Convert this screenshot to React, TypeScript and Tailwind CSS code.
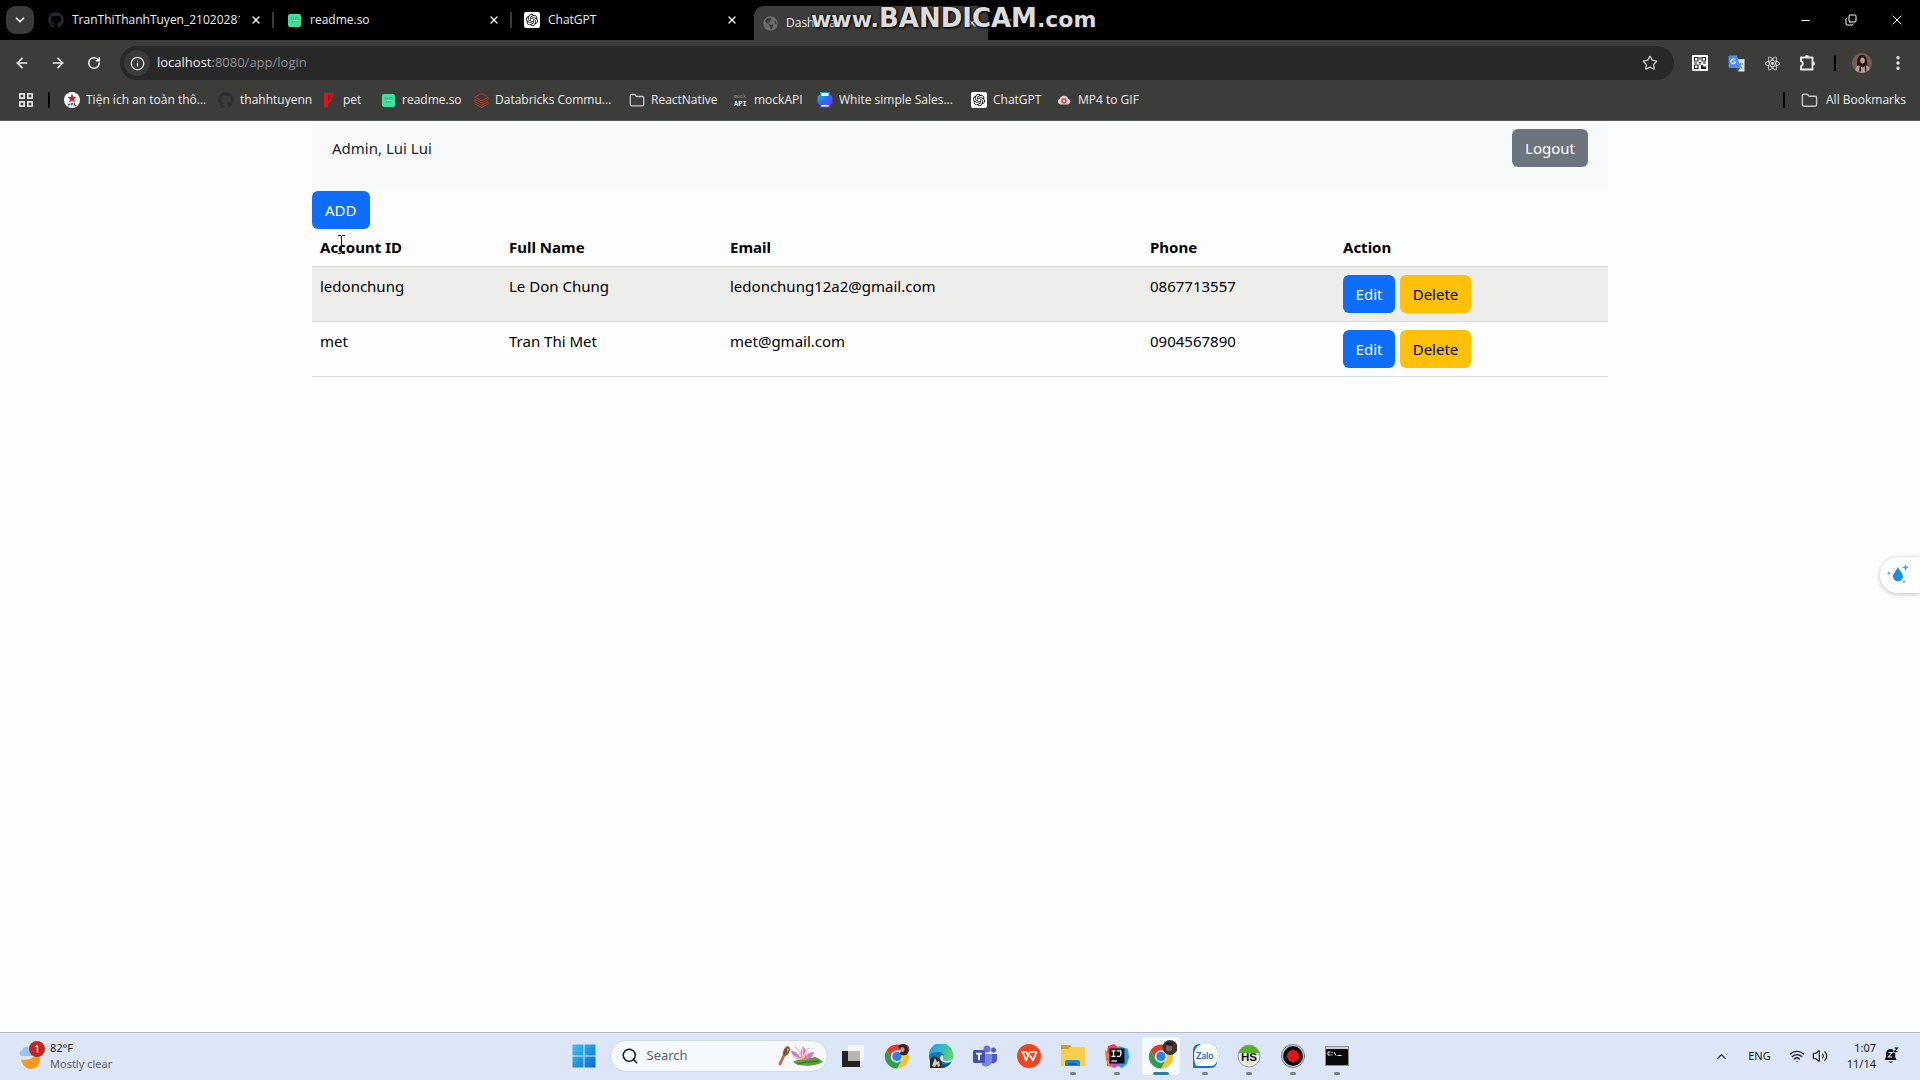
import type { ReactNode } from "react";
import {
  ArrowLeft,
  ArrowRight,
  ChevronDown,
  ChevronUp,
  Copy,
  EllipsisVertical,
  Folder,
  Info,
  Minus,
  Plus,
  RotateCw,
  Search,
  Star,
  Volume2,
  Wifi,
  X,
} from "lucide-react";
import { FaGithub, FaGlobeAmericas } from "react-icons/fa";
import { SiDatabricks, SiOpenai, SiReact } from "react-icons/si";

/* ---------- favicons ---------- */

const ReadmeIcon = () => (
  <svg width="13" height="13" viewBox="0 0 13 13" aria-hidden="true">
    <rect width="13" height="13" rx="2" fill="#3fe0a0" />
    <path d="M3 3.500h2.500v2.500H3zM7.500 3.500H10v2.500H7.500zM3 7.500h7" fill="none" stroke="#2bb67f" strokeWidth="0.800" />
    <path d="M3 6.500h7" stroke="#a8f5d4" strokeWidth="0.800" />
  </svg>
);

const OpenAiIcon = () => (
  <span className="flex size-4 items-center justify-center rounded-xs bg-white text-black">
    <SiOpenai size={12} />
  </span>
);

const SafetyIcon = () => (
  <svg width="16" height="16" viewBox="0 0 16 16" aria-hidden="true">
    <circle cx="8" cy="8" r="8" fill="#fff" />
    <path d="M8 1.500l1.300 3.200 3.400.2-2.600 2.200.9 3.400L8 8.600l-3 1.900.9-3.400L3.300 4.900l3.400-.2z" fill="#d21f26" />
    <path d="M4 11.500l1 2 1-2M7.500 13.500v-2h1.500v2M10.500 11v2.500h1.500" fill="none" stroke="#27407c" strokeWidth="0.9" />
  </svg>
);

const PetIcon = () => (
  <svg width="12" height="16" viewBox="0 0 12 16" aria-hidden="true">
    <path d="M1 1h10L8 9l-1.500 2-1-1L5 15H1z" fill="#e0131d" />
    <path d="M6 3v6M8 3L6.500 8" stroke="#5c0b10" />
  </svg>
);

const MockApiIcon = () => (
  <svg width="16" height="16" viewBox="0 0 16 16" aria-hidden="true">
    <text x="2" y="6" fontSize="5" fill="#9a9a9a" fontFamily="Liberation Mono, monospace">mock</text>
    <text x="2" y="14" fontSize="7" fontWeight="700" fill="#e8e8e8" fontFamily="Liberation Mono, monospace">API</text>
  </svg>
);

const SlideIcon = () => (
  <svg width="16" height="16" viewBox="0 0 16 16" aria-hidden="true">
    <defs>
      <linearGradient id="slide" x1="0" y1="0" x2="1" y2="1">
        <stop offset="0" stopColor="#0bc4d8" />
        <stop offset="0.5" stopColor="#2f6bf0" />
        <stop offset="1" stopColor="#8a2be8" />
      </linearGradient>
    </defs>
    <path d="M3 0h10v3l2.500 1v7L13 13v2.500H3V13L.5 11V4L3 3z" fill="url(#slide)" />
    <path d="M4.500 1h7v3h-7zM4.500 13h7v1.500h-7z" fill="#fff" />
  </svg>
);

const GifIcon = () => (
  <svg width="14" height="14" viewBox="0 0 16 16" aria-hidden="true">
    <path d="M4 13a3.300 3.300 0 0 1-.8-6.400A5 5 0 0 1 12.600 6.500 3.300 3.300 0 0 1 12.500 13z" fill="#ead9d9" />
    <circle cx="8" cy="9" r="3.200" fill="#d34a55" />
    <circle cx="8" cy="9" r="1.300" fill="#fff" />
  </svg>
);

const AppsIcon = () => (
  <svg width="16" height="16" viewBox="0 0 16 16" fill="none" stroke="#e3e3e3" strokeWidth="1.700" aria-hidden="true">
    <path d="M1.850 1.850h4.300v4.300h-4.300zM9.850 1.850h4.300v4.300h-4.300zM1.850 9.850h4.300v4.300h-4.300zM9.850 9.850h4.300v4.300h-4.300z" />
  </svg>
);

const QrIcon = () => (
  <svg width="16" height="16" viewBox="0 0 16 16" aria-hidden="true">
    <rect width="16" height="16" rx="1" fill="#fff" />
    <path d="M2.500 2.500h3.500v3.500h-3.500zM10 2.500h3.500v3.500H10zM2.500 10h3.500v3.500h-3.500z" fill="none" stroke="#222" strokeWidth="1.200" />
    <path d="M7.500 2h1v3h-1zM7 7h2v1.500H7zM2 7.500h3v1H2zM11 7.500h3v1h-3zM9 10h2v4H9zM11 11.500h3v2.500h-3zM7.500 9h1v1h-1z" fill="#222" />
  </svg>
);

const TranslateIcon = () => (
  <svg width="17" height="17" viewBox="0 0 17 17" aria-hidden="true">
    <path d="M7 4h9.500v12.500h-6z" fill="#dfe3e8" />
    <path d="M10 9h5M12.500 8v1c0 2-1.200 3.500-2.500 4.500M11.500 10.500l3 3" fill="none" stroke="#5d8a78" strokeWidth="1" />
    <path d="M1 .5h8L12.500 13H1.500a1 1 0 0 1-1-1V1.500z" fill="#4c8df6" />
    <path d="M8 13h4.500l-3 3.500z" fill="#2a56c6" />
    <path d="M7.200 5A2.300 2.300 0 1 0 7.500 7H5.300" fill="none" stroke="#fff" strokeWidth="1.200" />
  </svg>
);

const ExtensionsIcon = () => (
  <svg width="18" height="18" viewBox="0 0 18 18" fill="none" aria-hidden="true">
    <path
      d="M2 3.500h11.500V15.500H2v-3.300a2.600 2.600 0 0 0 0-5z"
      stroke="#ececec"
      strokeWidth="1.900"
      strokeLinejoin="round"
    />
    <path d="M5.800 3a2 2 0 0 1 4 0zM14 7.500a2 2 0 0 1 0 4z" fill="#ececec" />
  </svg>
);

const Avatar = () => (
  <svg width="20" height="20" viewBox="0 0 20 20" aria-hidden="true">
    <defs>
      <clipPath id="face">
        <circle cx="10" cy="10" r="10" />
      </clipPath>
    </defs>
    <g clipPath="url(#face)">
      <rect width="20" height="20" fill="#7b5a55" />
      <path d="M5 13C5 5 6.500 2 10.500 2S15 6 15.500 14l-3 3H7z" fill="#1d1214" />
      <ellipse cx="10.500" cy="7.500" rx="2.300" ry="3" fill="#c9968a" />
      <path d="M3 20c0-5 2-7.500 4-7.500l3.500 2 3-2c3 0 4.500 2.500 4.500 7.500z" fill="#b59aa4" />
      <path d="M8 11.500h1v7H7zM12.500 11.500h1.500l.5 7h-1.500z" fill="#221518" />
    </g>
  </svg>
);

/* ---------- taskbar icons ---------- */

const WindowsLogo = () => (
  <svg width="24" height="24" viewBox="0 0 24 24" aria-hidden="true">
    <defs>
      <linearGradient id="win" x1="0" y1="0" x2="1" y2="1">
        <stop offset="0" stopColor="#3fc5f3" />
        <stop offset="1" stopColor="#0668d0" />
      </linearGradient>
    </defs>
    <path d="M.5.5h11v11H.5zM12.500.5h11v11h-11zM.5 12.500h11v11H.5zM12.500 12.500h11v11h-11z" fill="url(#win)" />
  </svg>
);

const LotusArt = () => (
  <svg width="46" height="24" viewBox="0 0 46 24" aria-hidden="true">
    <path d="M3 20L8 9" stroke="#b5774c" strokeWidth="3" strokeLinecap="round" />
    <ellipse cx="9.500" cy="7" rx="3" ry="5" fill="#8b4f31" transform="rotate(25 9.500 7)" />
    <path d="M10 4l2 1-2 4z" fill="#d9a06f" />
    <path d="M16 18c6-4 14-3 22-5 4 1 6 3 8 5-7 4-23 6-30 0z" fill="#5c9a3a" />
    <path d="M20 20c6-2 14-2 22-3" stroke="#2f6e2b" fill="none" />
    <path d="M14 7c4 0 6 2 9 6 0-5 1-8 3-11 3 3 4 6 3 10 2-3 5-4 8-4-1 5-4 8-10 8-7 0-12-4-13-9z" fill="#d97ab8" />
    <path d="M18 3c3 2 5 6 6 10M32 4c-3 2-4 5-5 9M26 3c-1 4-1 7 0 11M16 12c3 2 6 3 9 3" stroke="#f3bfe0" strokeWidth="1.500" fill="none" />
    <circle cx="26" cy="13" r="1.500" fill="#f0c052" />
  </svg>
);

const TaskViewIcon = () => (
  <svg width="24" height="24" viewBox="0 0 24 24" aria-hidden="true">
    <path d="M7 1h16v16H7z" fill="#f6f7f8" />
    <path d="M1 7h18v16H1z" fill="#222" />
    <path d="M7 7h12v10H7z" fill="#b9b7b0" />
  </svg>
);

const ChromeLogo = ({ badge }: { badge?: "small" | "large" }) => (
  <svg width="32" height="32" viewBox="0 0 64 64" aria-hidden="true">
    <g transform="translate(8 9)">
      <path d="M24 12H44.780A24 24 0 0 0 3.215 12L13.608 30A12 12 0 0 1 24 12" fill="#e33b2e" />
      <path d="M34.390 30L24 48A24 24 0 0 0 44.780 12H24A12 12 0 0 1 34.390 30" fill="#fcc31e" />
      <path d="M13.608 30L3.215 12A24 24 0 0 0 24 48L34.390 30A12 12 0 0 1 13.608 30" fill="#2d9e4b" />
      <circle cx="24" cy="24" r="12" fill="#fff" />
      <circle cx="24" cy="24" r="9.500" fill="#2f7df0" />
    </g>
    {badge === "small" && (
      <g>
        <path d="M34 12c4-5 14-6 20 0l3 8-5 9c-6 3-12 2-15-2l4-6z" fill="#35202a" />
        <ellipse cx="43" cy="19" rx="4" ry="5" fill="#c79283" />
        <path d="M51 9l6 6-2 6z" fill="#7c55b0" />
      </g>
    )}
    {badge === "large" && (
      <g>
        <circle cx="50" cy="15" r="15" fill="#3d3430" />
        <ellipse cx="48" cy="16" rx="6" ry="7" fill="#7c665b" />
        <path d="M40 8c6-4 14-4 18 2l-8 2z" fill="#1d1817" />
      </g>
    )}
  </svg>
);

const EdgeLogo = () => (
  <svg width="24" height="24" viewBox="0 0 24 24" aria-hidden="true">
    <defs>
      <linearGradient id="edge-a" x1="0" y1="0" x2="1" y2="0.400">
        <stop offset="0" stopColor="#2196d8" />
        <stop offset="0.5" stopColor="#2fb5cf" />
        <stop offset="1" stopColor="#5fd36a" />
      </linearGradient>
    </defs>
    <circle cx="12" cy="12" r="12" fill="#1275c4" />
    <path d="M0 11A12 12 0 0 1 24 11c0 4-3 6-6.500 6-3 0-4-1.500-3.300-3C16 10.500 13 8 9 8 5 8 1.500 9 0 11z" fill="url(#edge-a)" />
    <path d="M14.200 14C13.500 15.500 14.500 17 17.500 17c2.500 0 4.500-1 5.700-3l.5.500-1 3C20 19.500 12 19 11 14.500 11 12.500 12 11.500 13.500 11c1 1 1.200 2 .7 3z" fill="#dce6f6" />
    <path d="M9.500 12c-2 4 1 8.500 6 8.500 3 0 5-.8 6.500-2A12 12 0 0 1 12 24C8 22 6 17 9.500 12z" fill="#0c4a8c" />
    <path d="M1 15l4-3 5 2 3 5-1 5H1z" fill="#2b2a2e" />
    <path d="M3 22l3-8 2 4 2-1 1 5-2 1-1-3-2 3z" fill="#d8c8a8" />
  </svg>
);

const TeamsLogo = () => (
  <svg width="24" height="24" viewBox="0 0 24 24" aria-hidden="true">
    <circle cx="14" cy="5" r="3.500" fill="#6c72d8" />
    <circle cx="20.500" cy="6" r="2.500" fill="#5059c9" />
    <path d="M17 10h7v6a4 4 0 0 1-7 2z" fill="#5059c9" />
    <path d="M8 10h11v7a6 6 0 0 1-10 4z" fill="#7b83eb" />
    <rect y="6" width="12" height="13" rx="1.500" fill="#464eb8" />
    <path d="M3 9.700h6M6 9.700v6.500" stroke="#fff" strokeWidth="1.800" />
  </svg>
);

const WpsLogo = () => (
  <svg width="24" height="24" viewBox="0 0 24 24" aria-hidden="true">
    <circle cx="12" cy="12" r="12" fill="#f5431e" />
    <path
      d="M4.200 8h5.300l1.500 3.500M5.800 8l3.200 8.500L12.800 8h6.700L16 16.500l-3-5"
      fill="none"
      stroke="#fff"
      strokeWidth="1.700"
      strokeLinejoin="round"
    />
  </svg>
);

const ExplorerLogo = () => (
  <svg width="24" height="24" viewBox="0 0 24 24" aria-hidden="true">
    <path d="M0 2a1 1 0 0 1 1-1h8l2 3v4H0z" fill="#d99a16" />
    <rect y="3" x="8" width="16" height="5" rx="1" fill="#fbcf4c" />
    <rect y="5" width="24" height="17" rx="1" fill="#fbcf4c" />
    <path d="M4 22v-4a2 2 0 0 1 2-2h11a2 2 0 0 1 2 2v4z" fill="#1f85cf" />
    <path d="M7 19h9v2H7z" fill="#0e62a5" />
  </svg>
);

const IntelliJLogo = () => (
  <svg width="24" height="24" viewBox="0 0 24 24" aria-hidden="true">
    <path d="M0 6l6 4-1 6-4 1z" fill="#f97a12" />
    <path d="M3 2l6-2 5 4-5 8-7-3z" fill="#e8405a" />
    <path d="M14 2l9 3 1 8-2 7-5 4-8-4z" fill="#1f9df0" />
    <path d="M2 14l3 8 5 2 6-5-8-6z" fill="#c64fd0" />
    <path d="M2 16l4 7-4-1z" fill="#f97a12" />
    <rect x="4.500" y="4.500" width="15" height="15" fill="#0a0a0a" />
    <path d="M6.500 6.800h4M8.500 6.800v5.500M6.500 12.300h4M12 6.800h3.800v4q0 1.500-1.700 1.500H12" fill="none" stroke="#fff" strokeWidth="1.300" />
    <path d="M6.500 17h5.500" stroke="#fff" strokeWidth="1.200" />
  </svg>
);

const ZaloLogo = () => (
  <svg width="26" height="26" viewBox="0 0 26 26" aria-hidden="true">
    <path d="M7 1h12a6 6 0 0 1 6 6v12a6 6 0 0 1-6 6H3l-2 0V7a6 6 0 0 1 6-6z" fill="#1570e8" />
    <path d="M9 1h10a6 6 0 0 1 6 6v10a6 6 0 0 1-6 6H9l-5 0q-2-5-2-10Q2 4 9 1z" fill="#fff" />
    <text x="4" y="16" fontSize="9" fontWeight="700" fill="#1570e8" fontFamily="Lato, sans-serif">Zalo</text>
  </svg>
);

const HeidiLogo = () => (
  <svg width="24" height="24" viewBox="0 0 24 24" aria-hidden="true">
    <circle cx="12" cy="12" r="11" fill="#e9ece6" stroke="#9aa098" />
    <path d="M1.500 9a11 11 0 0 1 21 0z" fill="#55b32b" />
    <text x="4" y="16.500" fontSize="11.500" fontWeight="700" fill="#111" fontFamily="Liberation Sans, sans-serif">HS</text>
  </svg>
);

const RecordLogo = () => (
  <svg width="24" height="24" viewBox="0 0 24 24" aria-hidden="true">
    <circle cx="12" cy="12" r="11.500" fill="#d9dcdf" stroke="#55585c" strokeWidth="0.800" />
    <circle cx="12" cy="12" r="10" fill="#0d0d0d" />
    <circle cx="12" cy="12" r="6" fill="#e5141c" />
  </svg>
);

const TerminalLogo = () => (
  <svg width="24" height="24" viewBox="0 0 24 24" aria-hidden="true">
    <rect x="0.500" y="2.500" width="23" height="19" fill="#0b0b0b" stroke="#8a8f94" />
    <path d="M1 3h22v2H1z" fill="#c9cdd2" />
    <path d="M5.500 8H3v3h2.500M7 8v1M7 10.500v1M9 8l2 3.500M12.500 11.500h4" stroke="#f0f0f0" fill="none" />
  </svg>
);

const WeatherIcon = () => (
  <svg width="28" height="30" viewBox="0 0 28 30" aria-hidden="true">
    <path d="M3 18c3 2 13 1 16-6 5 4 4 15-6 16-5 0-9-4-10-10z" fill="#f59a1c" />
    <path d="M3 15a3 3 0 0 1 .8-5.500A5 5 0 0 1 12 7l3 8z" fill="#9cc3ea" />
    <circle cx="19" cy="8" r="8" fill="#c4261d" />
    <text x="16" y="12" fontSize="11" fill="#fff" fontFamily="Noto Sans, sans-serif">1</text>
  </svg>
);

const BellIcon = () => (
  <svg width="16" height="18" viewBox="0 0 16 18" aria-hidden="true">
    <path d="M6.500 2A4.500 4.500 0 0 0 2 6.500V10L.5 13h12L11.200 10V2.800z" fill="#111" />
    <path d="M4.500 14.500h4.500q-2.250 2.800-4.500 0z" fill="#111" />
    <path d="M4.500 5.500h3.500l-3.500 4.500H8" fill="none" stroke="#dfe8f6" strokeWidth="1.200" />
    <rect x="9.300" y="0" width="5.500" height="6" fill="#dce6f6" />
    <path d="M10.500 1h3l-3 3.600h3" fill="none" stroke="#111" strokeWidth="1.200" />
  </svg>
);

/* ---------- browser chrome ---------- */

interface TabProps {
  icon: ReactNode;
  title: string;
  active?: boolean;
  divider?: boolean;
}

function Tab({ icon, title, active, divider }: TabProps) {
  return (
    <div
      className={
        active
          ? "relative flex h-[34px] w-[234px] items-center gap-2 self-end rounded-t-[10px] bg-[#3c3c3a] px-2"
          : "relative flex h-full w-[238px] items-center gap-2 pr-[14px] pl-2"
      }
    >
      <span className="flex size-4 shrink-0 items-center justify-center">{icon}</span>
      <span className="min-w-0 flex-1 overflow-hidden text-[12px] whitespace-nowrap text-[#ececec]">{title}</span>
      <button type="button" aria-label={`Close ${title}`} className="flex size-4 items-center justify-center text-white">
        <X size={12} strokeWidth={2.5} />
      </button>
      {divider && <span className="absolute top-3 right-1 h-4 w-0.5 bg-[#3c3c3a]" />}
    </div>
  );
}

function TabStrip() {
  return (
    <div className="relative flex h-10 items-center bg-black">
      <button
        type="button"
        aria-label="Search tabs"
        className="mx-[6px] flex size-7 items-center justify-center rounded-[10px] bg-[#3a3a3a] text-white"
      >
        <ChevronDown size={14} strokeWidth={3} />
      </button>
      <Tab icon={<FaGithub size={16} className="text-[#25292e]" />} title="TranThiThanhTuyen_21020281_" divider />
      <Tab icon={<ReadmeIcon />} title="readme.so" divider />
      <Tab icon={<OpenAiIcon />} title="ChatGPT" />
      <Tab icon={<FaGlobeAmericas size={15} className="text-[#6c6c6c]" />} title="Dashboard" active />
      <button type="button" aria-label="New tab" className="ml-3 text-white">
        <Plus size={14} />
      </button>
      <div className="ml-auto flex h-full">
        <button type="button" aria-label="Minimize" className="flex w-[46px] items-center justify-center text-white">
          <Minus size={13} strokeWidth={2} />
        </button>
        <button type="button" aria-label="Restore" className="flex w-[46px] items-center justify-center text-white">
          <Copy size={12} strokeWidth={2} className="-scale-y-100" />
        </button>
        <button type="button" aria-label="Close window" className="flex w-[46px] items-center justify-center text-white">
          <X size={16} strokeWidth={1.5} />
        </button>
      </div>
      <p className="absolute top-0.5 left-[811px] flex items-baseline font-['DejaVu_Sans'] leading-8 font-bold text-[#dcdcdc] [text-shadow:0_0_3px_#000,1px_1px_2px_#000]">
        <span className="text-[22px]">www.</span>
        <span className="text-[26px]">BANDICAM</span>
        <span className="text-[22px]">.com</span>
      </p>
    </div>
  );
}

function IconButton({ label, children }: { label: string; children: ReactNode }) {
  return (
    <button type="button" aria-label={label} className="flex size-9 items-center justify-center text-[#ececec]">
      {children}
    </button>
  );
}

function Toolbar() {
  return (
    <div className="flex h-[46px] items-center bg-[#3c3c3a] pr-1 pl-1">
      <IconButton label="Back">
        <ArrowLeft size={16} strokeWidth={2.5} />
      </IconButton>
      <IconButton label="Forward">
        <ArrowRight size={16} strokeWidth={2.5} />
      </IconButton>
      <IconButton label="Reload">
        <RotateCw size={14} strokeWidth={2.8} />
      </IconButton>
      <form className="ml-2 flex h-[34px] flex-1 items-center rounded-full bg-[#282829] pr-4 pl-1" onSubmit={(e) => e.preventDefault()}>
        <span className="flex size-[26px] items-center justify-center rounded-full bg-[#3a3a3a] text-[#e3e3e3]">
          <Info size={15} />
        </span>
        <label className="relative ml-[7px] flex-1 text-[13px] text-[#8f8f8f]">
          <span className="text-[#ececec]">localhost</span>:8080/app/login
          <input type="text" aria-label="Address" className="absolute inset-0 w-full bg-transparent outline-none" />
        </label>
        <button type="button" aria-label="Bookmark this page" className="text-[#c7c7c7]">
          <Star size={16} strokeWidth={2} />
        </button>
      </form>
      <div className="ml-2 flex items-center">
        <IconButton label="QR code">
          <QrIcon />
        </IconButton>
        <IconButton label="Translate">
          <TranslateIcon />
        </IconButton>
        <IconButton label="React tools">
          <SiReact size={15} />
        </IconButton>
        <IconButton label="Extensions">
          <ExtensionsIcon />
        </IconButton>
        <span className="mx-2 h-4 w-0.5 bg-black" />
        <IconButton label="Profile">
          <Avatar />
        </IconButton>
        <IconButton label="Menu">
          <EllipsisVertical size={18} strokeWidth={2.5} />
        </IconButton>
      </div>
    </div>
  );
}

const bookmarks = [
  { label: "Tiện ích an toàn thô...", width: "w-[154px]", icon: <SafetyIcon /> },
  { label: "thahhtuyenn", width: "w-[103px]", icon: <FaGithub size={16} className="text-[#2b2f34]" /> },
  { label: "pet", width: "w-[59px]", icon: <PetIcon /> },
  { label: "readme.so", width: "w-[93px]", icon: <ReadmeIcon /> },
  { label: "Databricks Commu...", width: "w-[156px]", icon: <SiDatabricks size={15} className="text-[#d63a22]" /> },
  { label: "ReactNative", width: "w-[103px]", icon: <Folder size={17} className="text-[#c7c7c7]" /> },
  { label: "mockAPI", width: "w-[85px]", icon: <MockApiIcon /> },
  { label: "White simple Sales...", width: "w-[154px]", icon: <SlideIcon /> },
  { label: "ChatGPT", width: "w-[85px]", icon: <OpenAiIcon /> },
  { label: "MP4 to GIF", width: "w-[90px]", icon: <GifIcon /> },
];

function Bookmark({ label, width, icon }: { label: string; width: string; icon: ReactNode }) {
  return (
    <a href="#" className={`flex shrink-0 items-center gap-[6px] whitespace-nowrap ${width}`}>
      <span className="flex size-4 shrink-0 items-center justify-center">{icon}</span>
      {label}
    </a>
  );
}

function BookmarkBar() {
  return (
    <nav aria-label="Bookmarks" className="flex h-[35px] items-center border-b border-[#5a5a5a] bg-[#3c3c3a] pr-[14px] pb-[6px] pl-[18px] text-[12px] text-[#ececec]">
      <button type="button" aria-label="Apps">
        <AppsIcon />
      </button>
      <span className="mx-[14px] h-4 w-0.5 bg-black" />
      {bookmarks.map((b) => (
        <Bookmark key={b.label} {...b} />
      ))}
      <span className="mr-4 ml-auto h-4 w-0.5 bg-black" />
      <a href="#" className="flex items-center gap-2">
        <Folder size={17} className="text-[#c7c7c7]" />
        All Bookmarks
      </a>
    </nav>
  );
}

/* ---------- page ---------- */

const accounts = [
  { id: "ledonchung", name: "Le Don Chung", email: "ledonchung12a2@gmail.com", phone: "0867713557" },
  { id: "met", name: "Tran Thi Met", email: "met@gmail.com", phone: "0904567890" },
];

const headings = ["Account ID", "Full Name", "Email", "Phone", "Action"];

function Dashboard() {
  return (
    <main className="relative flex-1 bg-[#fdfdfd] text-[15px] leading-6 text-[#212529]">
      <div className="mx-auto max-w-[1296px]">
        <header className="flex h-[70px] items-start justify-between bg-[#f7f9fb] px-5 pt-2">
          <p className="py-[7px]">Admin, Lui Lui</p>
          <button type="button" className="h-[38px] rounded-md bg-[#6c757d] px-[13px] text-white">
            Logout
          </button>
        </header>
        <button type="button" className="block h-[38px] rounded-md bg-[#0d6efd] px-[13px] text-white">
          ADD
        </button>
        <table className="w-full table-fixed border-collapse text-left text-black">
          <colgroup>
            <col className="w-[189px]" />
            <col className="w-[221px]" />
            <col className="w-[420px]" />
            <col className="w-[193px]" />
            <col />
          </colgroup>
          <thead>
            <tr className="border-b border-[#d3d5d0]">
              {headings.map((h) => (
                <th key={h} className="px-2 pt-[6px] pb-[7px]">
                  {h}
                </th>
              ))}
            </tr>
          </thead>
          <tbody>
            {accounts.map((a) => (
              <tr key={a.id} className="border-b border-[#d9dbdd] align-top odd:bg-[#ededeb]">
                <td className="px-2 py-[7px]">{a.id}</td>
                <td className="px-2 py-[7px]">{a.name}</td>
                <td className="px-2 py-[7px]">{a.email}</td>
                <td className="px-2 py-[7px]">{a.phone}</td>
                <td className="p-2">
                  <div className="flex gap-[5px]">
                    <button type="button" className="h-[38px] w-[52px] rounded-md bg-[#0d6efd] text-white">
                      Edit
                    </button>
                    <button type="button" className="h-[38px] w-[71px] rounded-md bg-[#ffc107] text-black">
                      Delete
                    </button>
                  </div>
                </td>
              </tr>
            ))}
          </tbody>
        </table>
      </div>
      <svg className="absolute top-[114px] left-[337px]" width="9" height="19" viewBox="0 0 9 19" fill="none" stroke="#222" aria-hidden="true">
        <path d="M1 .5h3M5 .5h3M4.500 1v17M1 18.500h3M5 18.500h3" />
      </svg>
      <button
        type="button"
        aria-label="Assistant"
        className="absolute top-[436px] right-0 flex h-[36px] w-[40px] items-center justify-center rounded-l-full bg-white pr-1 shadow-[0_1px_5px_rgba(0,0,0,0.25)]"
      >
        <svg width="24" height="22" viewBox="0 0 24 22" aria-hidden="true">
          <path d="M12 3c2 4 5 6.500 5 9.500a5 5 0 0 1-10 0C7 9.500 10 7 12 3z" fill="#1592dc" />
          <path d="M19.500 0l.9 2.600 2.600.9-2.600.9-.9 2.600-.9-2.600-2.600-.9 2.600-.9zM3 7l.6 1.600 1.600.6-1.600.6L3 11.400l-.6-1.600-1.600-.6 1.600-.6zM18 16l.5 1.200 1.200.5-1.200.5-.5 1.200-.5-1.200-1.200-.5 1.200-.5z" fill="#3ba8e6" />
        </svg>
      </button>
    </main>
  );
}

/* ---------- taskbar ---------- */

const apps: { name: string; icon: ReactNode; running?: boolean; active?: boolean }[] = [
  { name: "Task view", icon: <TaskViewIcon /> },
  { name: "Chrome", icon: <ChromeLogo badge="small" /> },
  { name: "Edge", icon: <EdgeLogo /> },
  { name: "Teams", icon: <TeamsLogo /> },
  { name: "WPS Office", icon: <WpsLogo /> },
  { name: "File Explorer", icon: <ExplorerLogo />, running: true },
  { name: "IntelliJ IDEA", icon: <IntelliJLogo />, running: true },
  { name: "Chrome window", icon: <ChromeLogo badge="large" />, active: true },
  { name: "Zalo", icon: <ZaloLogo />, running: true },
  { name: "HeidiSQL", icon: <HeidiLogo />, running: true },
  { name: "Bandicam", icon: <RecordLogo />, running: true },
  { name: "Command Prompt", icon: <TerminalLogo />, running: true },
];

function Taskbar() {
  return (
    <footer className="grid h-[48px] grid-cols-[1fr_auto_1fr] items-center border-t border-[#b4b8c8] bg-[#dce6f6] pb-px font-['Noto_Sans',sans-serif] text-[11px] text-[#1b1b1b]">
      <div className="flex items-center gap-1 pl-[18px] leading-4">
        <WeatherIcon />
        <p>
          82°F
          <br />
          <span className="text-[#5a616b]">Mostly clear</span>
        </p>
      </div>
      <div className="flex h-full items-center">
        <button type="button" aria-label="Start" className="flex w-11 justify-center">
          <WindowsLogo />
        </button>
        <label className="mr-[3px] ml-1 flex h-8 w-[218px] items-center gap-2 rounded-full border border-[#d3dbe6] bg-[#f5f9fd] pr-1 pl-2">
          <Search size={18} strokeWidth={2} className="ml-[2px] shrink-0" />
          <input
            type="text"
            aria-label="Search"
            placeholder="Search"
            className="w-full min-w-0 flex-1 bg-transparent text-[13px] outline-none placeholder:text-[#5c6066]"
          />
          <LotusArt />
        </label>
        {apps.map((app) => (
          <button
            key={app.name}
            type="button"
            aria-label={app.name}
            className="relative flex h-full w-11 items-center justify-center"
          >
            {app.active && <span className="absolute inset-x-[3px] inset-y-1 rounded-sm bg-[#f6f9fe]" />}
            <span className="relative">{app.icon}</span>
            {app.running && <span className="absolute bottom-1 h-[3px] w-[6px] rounded-full bg-[#7a808a]" />}
            {app.active && <span className="absolute bottom-1 h-[3px] w-4 rounded-full bg-[#2e7f94]" />}
          </button>
        ))}
      </div>
      <div className="flex items-center justify-end pr-5">
        <button type="button" aria-label="Show hidden icons" className="mr-[19px]">
          <ChevronUp size={15} />
        </button>
        <span className="mr-[18px]">ENG</span>
        <Wifi size={16} className="mr-[7px]" />
        <Volume2 size={16} strokeWidth={1.8} className="mr-[19px]" />
        <p className="mr-2 text-right leading-4">
          1:07
          <br />
          11/14
        </p>
        <BellIcon />
      </div>
    </footer>
  );
}

export default function App() {
  return (
    <div className="flex min-h-screen flex-col font-['Noto_Sans',sans-serif]">
      <div className="font-['Open_Sans',sans-serif]">
        <TabStrip />
        <Toolbar />
        <BookmarkBar />
      </div>
      <Dashboard />
      <Taskbar />
    </div>
  );
}
